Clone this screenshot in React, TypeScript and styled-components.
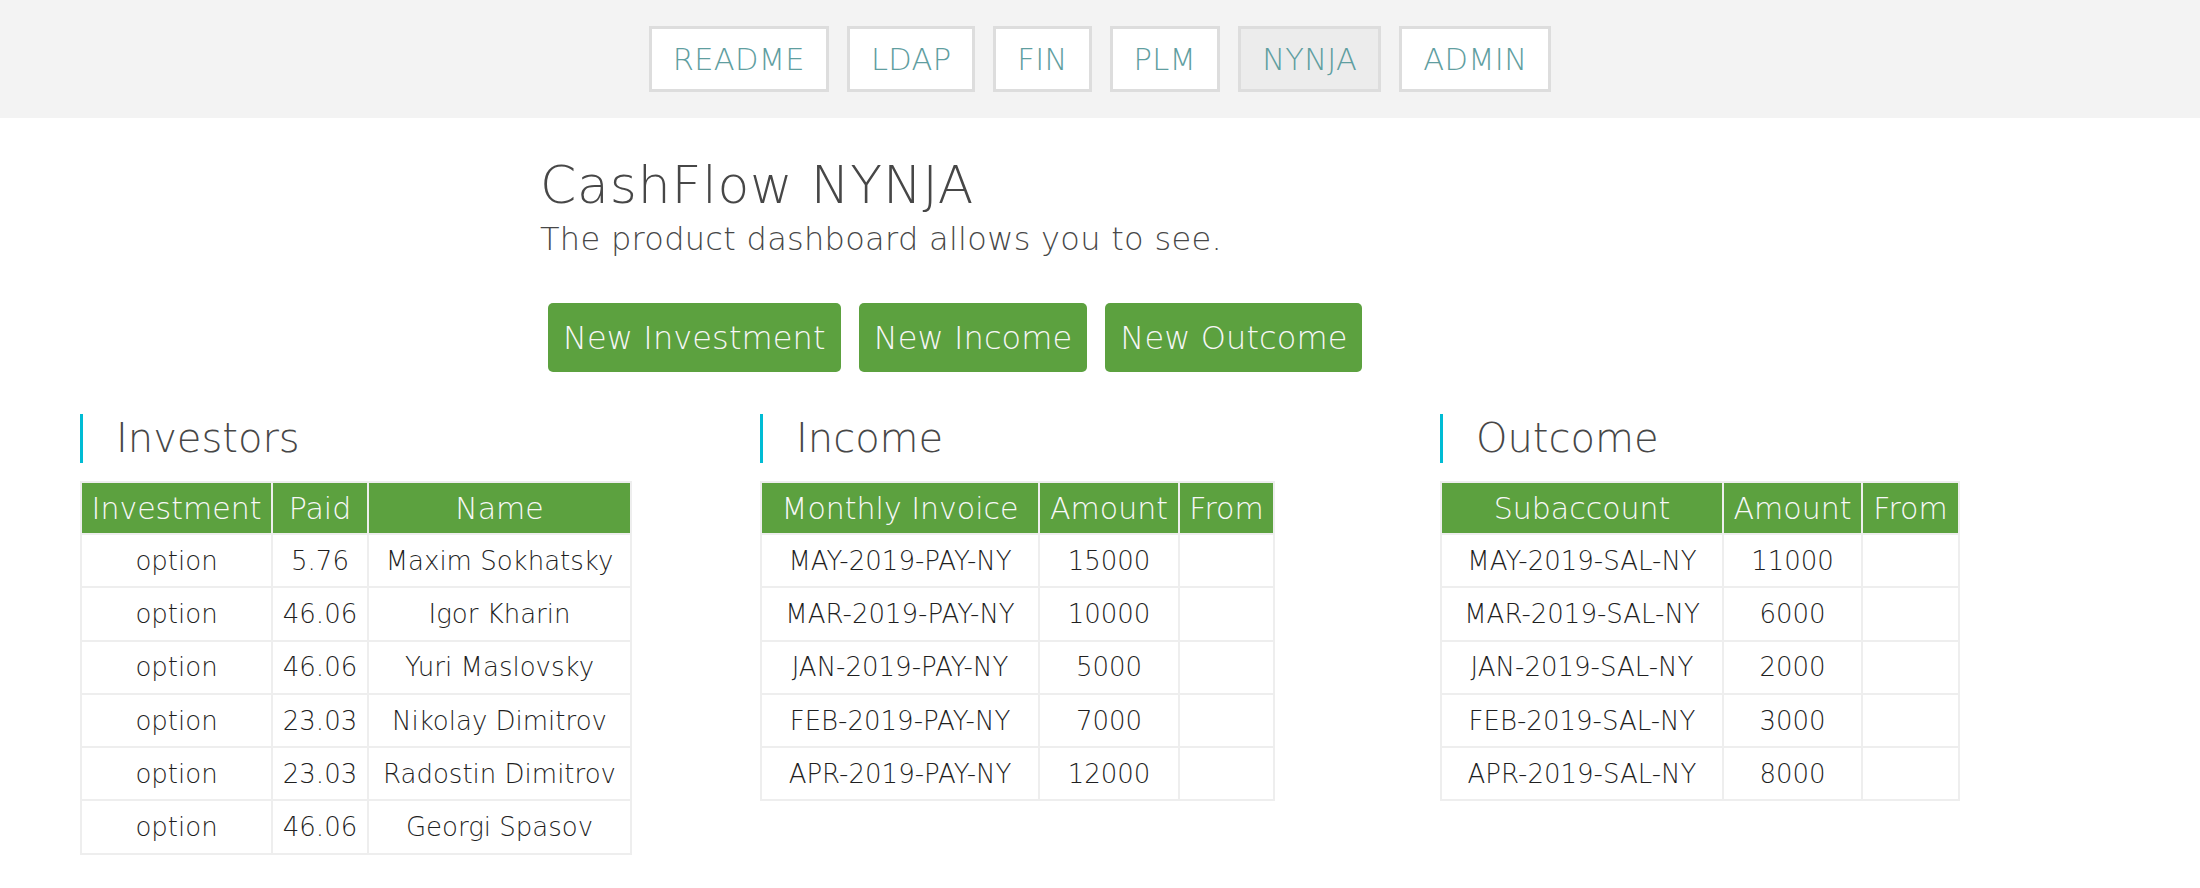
import React from "react";
import styled, { createGlobalStyle } from "styled-components";

const GlobalStyle = createGlobalStyle`
  html, body {
    margin: 0;
    padding: 0;
    background: #ffffff;
  }
  body {
    font-family: "DejaVu Sans", "Open Sans", "Liberation Sans", sans-serif;
    font-weight: 300;
    color: #555555;
  }
  * { box-sizing: border-box; }
`;

const Nav = styled.nav`
  display: flex;
  justify-content: center;
  gap: 18px;
  padding: 26px 0;
  background: #f3f3f3;
`;

const NavButton = styled.a<{ $active?: boolean }>`
  display: flex;
  align-items: center;
  height: 66px;
  padding: 0 21px;
  border: 3px solid #dddddd;
  background: ${(p) => (p.$active ? "#ececec" : "#ffffff")};
  color: #5f9ea0;
  font-size: 30.5px;
  font-weight: 300;
  letter-spacing: 0.3px;
  text-decoration: none;
  cursor: pointer;
`;

const Intro = styled.header`
  width: 1120px;
  margin: 37px auto 0;
`;

const Title = styled.h1`
  margin: 0;
  font-size: 52px;
  line-height: 60px;
  font-weight: 300;
  letter-spacing: 0.8px;
  color: #474747;
`;

const Subtitle = styled.p`
  margin: 4px 0 0;
  font-size: 32px;
  line-height: 40px;
  font-weight: 300;
  letter-spacing: 0.3px;
  color: #474747;
`;

const Actions = styled.div`
  display: flex;
  gap: 18px;
  margin-top: 44px;
  padding-left: 8px;
`;

const ActionButton = styled.button`
  height: 69px;
  padding: 0 15px;
  border: none;
  border-radius: 5px;
  background: #5ca13f;
  color: #f6f6f6;
  font-family: inherit;
  font-size: 32px;
  font-weight: 300;
  letter-spacing: 0.1px;
  cursor: pointer;
`;

const Sections = styled.main`
  display: grid;
  grid-template-columns: repeat(3, 680px);
  padding: 0 80px;
  margin-top: 42px;
`;

const Section = styled.section`
  display: flex;
  flex-direction: column;
  align-items: flex-start;
`;

const SectionTitle = styled.h2`
  margin: 0;
  padding-left: 33px;
  border-left: 3px solid #00bcd4;
  font-size: 40px;
  line-height: 49px;
  font-weight: 300;
  color: #474747;
`;

const Table = styled.table`
  margin-top: 18px;
  border-collapse: collapse;
  border: 2px solid #eeeeee;
`;

const Th = styled.th<{ $w: number }>`
  width: ${(p) => p.$w}px;
  height: 52px;
  padding: 0 8px;
  border: 2px solid #eeeeee;
  background: #5ca13f;
  color: #f8f8f8;
  font-size: 30px;
  font-weight: 300;
  white-space: nowrap;
  text-align: center;
`;

const Td = styled.td`
  height: 53.3px;
  padding: 0 8px;
  border: 2px solid #eeeeee;
  color: #1f1f1f;
  font-size: 26px;
  font-weight: 300;
  white-space: nowrap;
  text-align: center;
`;

type Col = { label: string; w: number };

const DataTable = ({ cols, rows }: { cols: Col[]; rows: string[][] }) => (
  <Table>
    <thead>
      <tr>
        {cols.map((c) => (
          <Th key={c.label} $w={c.w}>
            {c.label}
          </Th>
        ))}
      </tr>
    </thead>
    <tbody>
      {rows.map((r, i) => (
        <tr key={i}>
          {r.map((cell, j) => (
            <Td key={j}>{cell}</Td>
          ))}
        </tr>
      ))}
    </tbody>
  </Table>
);

const investors = [
  ["option", "5.76", "Maxim Sokhatsky"],
  ["option", "46.06", "Igor Kharin"],
  ["option", "46.06", "Yuri Maslovsky"],
  ["option", "23.03", "Nikolay Dimitrov"],
  ["option", "23.03", "Radostin Dimitrov"],
  ["option", "46.06", "Georgi Spasov"],
];

const income = [
  ["MAY-2019-PAY-NY", "15000", ""],
  ["MAR-2019-PAY-NY", "10000", ""],
  ["JAN-2019-PAY-NY", "5000", ""],
  ["FEB-2019-PAY-NY", "7000", ""],
  ["APR-2019-PAY-NY", "12000", ""],
];

const outcome = [
  ["MAY-2019-SAL-NY", "11000", ""],
  ["MAR-2019-SAL-NY", "6000", ""],
  ["JAN-2019-SAL-NY", "2000", ""],
  ["FEB-2019-SAL-NY", "3000", ""],
  ["APR-2019-SAL-NY", "8000", ""],
];

const navItems = ["README", "LDAP", "FIN", "PLM", "NYNJA", "ADMIN"];

export default function App() {
  return (
    <>
      <GlobalStyle />
      <Nav>
        {navItems.map((n) => (
          <NavButton key={n} $active={n === "NYNJA"}>
            {n}
          </NavButton>
        ))}
      </Nav>
      <Intro>
        <Title>CashFlow NYNJA</Title>
        <Subtitle>The product dashboard allows you to see.</Subtitle>
        <Actions>
          <ActionButton>New Investment</ActionButton>
          <ActionButton>New Income</ActionButton>
          <ActionButton>New Outcome</ActionButton>
        </Actions>
      </Intro>
      <Sections>
        <Section>
          <SectionTitle>Investors</SectionTitle>
          <DataTable
            cols={[
              { label: "Investment", w: 191 },
              { label: "Paid", w: 96 },
              { label: "Name", w: 263 },
            ]}
            rows={investors}
          />
        </Section>
        <Section>
          <SectionTitle>Income</SectionTitle>
          <DataTable
            cols={[
              { label: "Monthly Invoice", w: 278 },
              { label: "Amount", w: 140 },
              { label: "From", w: 95 },
            ]}
            rows={income}
          />
        </Section>
        <Section>
          <SectionTitle>Outcome</SectionTitle>
          <DataTable
            cols={[
              { label: "Subaccount", w: 282 },
              { label: "Amount", w: 139 },
              { label: "From", w: 97 },
            ]}
            rows={outcome}
          />
        </Section>
      </Sections>
    </>
  );
}
